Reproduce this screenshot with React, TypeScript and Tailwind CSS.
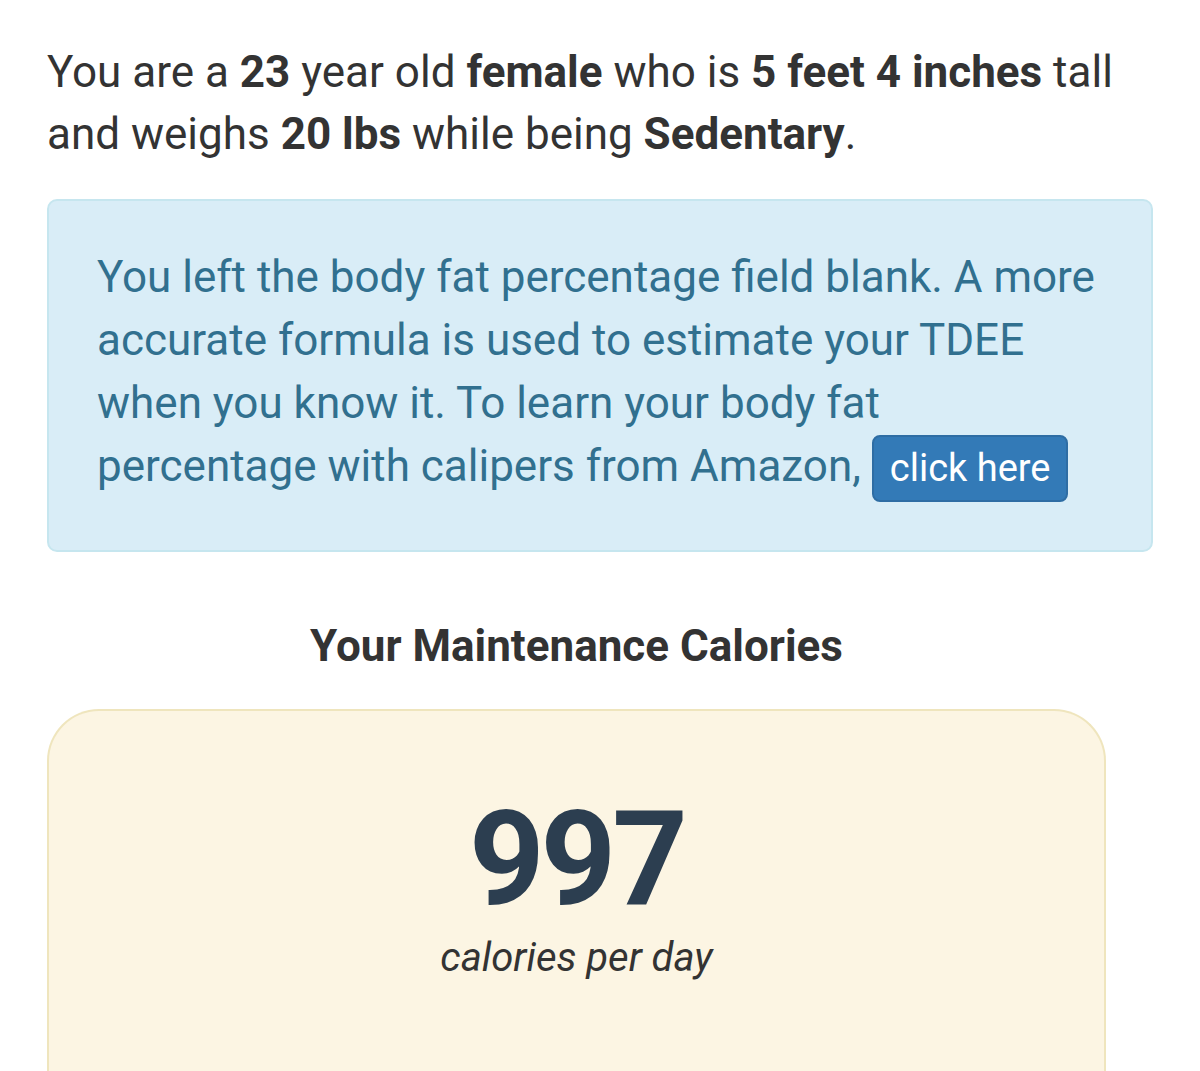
export default function App() {
  return (
    <div className="min-h-screen bg-white font-['Roboto',sans-serif] text-[#333]">
      <div className="pl-[47px] pt-[41px] w-[1153px]">
        {/* summary sentence */}
        <p className="text-[44px] leading-[62px] pr-[40px]">
          You are a <b>23</b> year old <b>female</b> who is <b>5 feet 4 inches</b> tall and weighs{" "}
          <b>20 lbs</b> while being <b>Sedentary</b>.
        </p>

        {/* body fat notice */}
        <div className="mt-[34px] rounded-[10px] border-2 border-[#c6e6ef] bg-[#d9edf7] pl-[48px] pr-[52px] pt-[45px] pb-[48px] text-[#31708f]">
          <p className="text-[44px] leading-[63px]">
            You left the body fat percentage field blank. A more accurate formula is used to estimate your TDEE when
            you know it. To learn your body fat percentage with calipers from Amazon,{" "}
            <button className="inline-block rounded-[8px] border-2 border-[#2e6da4] bg-[#337ab7] px-[16px] text-[38px] leading-[63px] text-white align-baseline">
              click here
            </button>
          </p>
        </div>

        <h2 className="mt-[64px] w-[1059px] text-center text-[44px] font-bold leading-[60px]">Your Maintenance Calories</h2>

        {/* result card */}
        <div className="mt-[33px] w-[1059px] h-[400px] rounded-t-[52px] border-2 border-b-0 border-[#efe5bd] bg-[#fcf5e3] pt-[73px] text-center">
          <div className="text-[132px] font-bold leading-[150px] tracking-[-4px] text-[#2c3e50]">997</div>
          <div className="text-[40px] italic leading-[48px] text-[#333]">calories per day</div>
        </div>
      </div>
    </div>
  );
}
